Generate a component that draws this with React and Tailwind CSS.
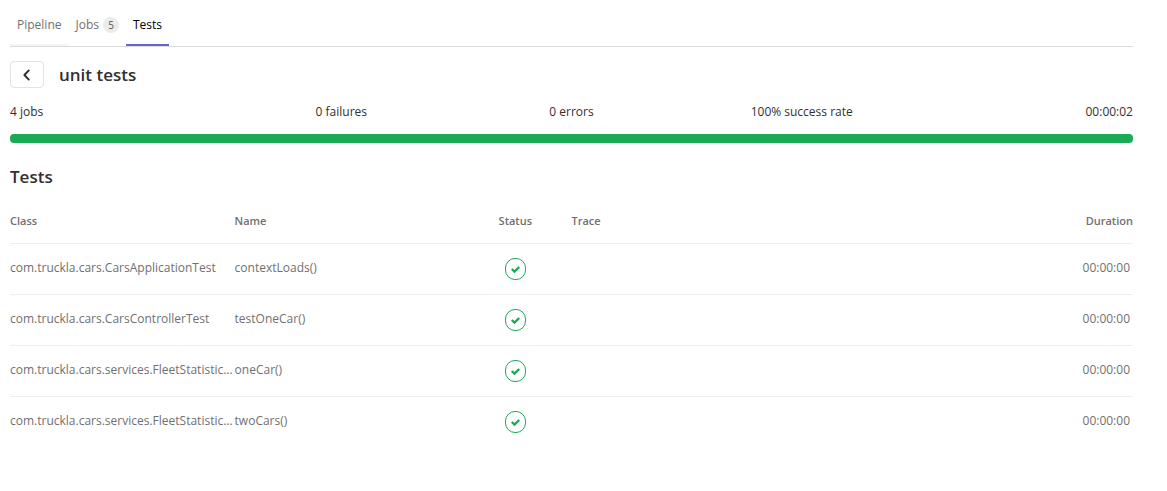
const tests = [
  { cls: "com.truckla.cars.CarsApplicationTest", name: "contextLoads()" },
  { cls: "com.truckla.cars.CarsControllerTest", name: "testOneCar()" },
  { cls: "com.truckla.cars.services.FleetStatistic...", name: "oneCar()" },
  { cls: "com.truckla.cars.services.FleetStatistic...", name: "twoCars()" },
];

function PassedIcon() {
  return (
    <svg className="mx-auto block" width="22" height="22" viewBox="0 0 22 22" role="img" aria-label="Passed">
      <rect x="1.5" y="0.5" width="20" height="21" rx="9.5" fill="none" stroke="#1aaa55" strokeWidth="1" />
      <path d="M7.8 11l2.7 2.6 4.7-4.6" fill="none" stroke="#1aaa55" strokeWidth="2.4" />
    </svg>
  );
}

export default function App() {
  return (
    <main className="bg-white pt-1 pr-[34px] pl-[10px] font-['Open_Sans','Noto_Sans',sans-serif] text-[12px] leading-5 text-[#303030]">
      <nav className="flex border-b border-[#dbdbdb] text-[#707070]">
        <a href="#pipeline" className="border-b-2 border-[#f5f5f5] px-[7px] pt-[11px] pb-[9px]">
          Pipeline
        </a>
        <a href="#jobs" className="flex gap-1 border-b-2 border-transparent px-[7px] pt-[11px] pb-[9px]">
          Jobs
          <span className="mt-[2px] flex h-4 w-4 items-center justify-center rounded-full bg-[#ececec] text-[10px] text-[#525252]">
            5
          </span>
        </a>
        <a
          href="#tests"
          aria-current="page"
          className="border-b-2 border-[#6666c4] px-[7px] pt-[11px] pb-[9px] font-medium text-black"
        >
          Tests
        </a>
      </nav>

      <div className="mt-[14px] flex items-center gap-[15px]">
        <button
          type="button"
          aria-label="Back"
          className="flex h-[27px] w-[34px] items-center justify-center rounded-[4px] border border-[#e3e3e3] bg-white"
        >
          <svg width="14" height="14" viewBox="0 0 14 14" fill="none" stroke="#2e2e2e" strokeWidth="1.9" strokeLinecap="round" strokeLinejoin="round">
            <path d="M8.8 2.4L4.4 7l4.4 4.6" />
          </svg>
        </button>
        <h1 className="text-[17px] leading-6 font-semibold">unit tests</h1>
      </div>

      <div className="-mx-[14px] mt-[14px] grid grid-cols-5 text-center">
        <div className="px-[14px] text-left">4 jobs</div>
        <div>0 failures</div>
        <div>0 errors</div>
        <div>100% success rate</div>
        <div className="px-[14px] text-right">00:00:02</div>
      </div>

      <div
        role="progressbar"
        aria-label="Success rate"
        aria-valuenow={100}
        aria-valuemin={0}
        aria-valuemax={100}
        className="mt-3 h-[9px] rounded-[4px] bg-[#1aaa55]"
      />

      <h2 className="mt-[22px] text-[17px] leading-6 font-semibold">Tests</h2>

      <table className="mt-[9px] w-full table-fixed border-collapse text-left text-[#707070]">
        <thead>
          <tr className="h-[45px] border-b border-[#eeeeee] text-[11px] *:pt-[2px] *:font-semibold">
            <th className="w-1/5">Class</th>
            <th className="w-1/5">Name</th>
            <th className="w-1/10 text-center">Status</th>
            <th className="w-2/5">Trace</th>
            <th className="w-1/10 text-right">Duration</th>
          </tr>
        </thead>
        <tbody>
          {tests.map((test, i) => (
            <tr key={i} className="h-[51px] border-b border-[#eeeeee] last:border-b-0">
              <td className="pb-[2px] whitespace-nowrap">{test.cls}</td>
              <td className="pb-[2px] whitespace-nowrap">{test.name}</td>
              <td>
                <PassedIcon />
              </td>
              <td></td>
              <td className="pr-[3px] pb-[2px] text-right">00:00:00</td>
            </tr>
          ))}
        </tbody>
      </table>
    </main>
  );
}
